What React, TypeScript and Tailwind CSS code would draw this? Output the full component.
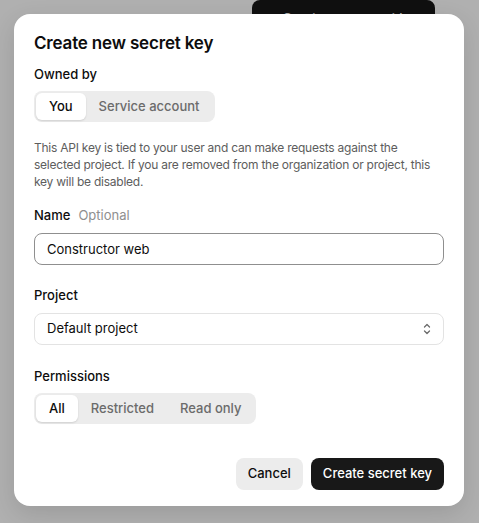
import React, { useState } from 'react';

const font = { fontFamily: 'Inter, "Noto Sans", sans-serif' };

type SegmentProps = {
    options: string[];
    value: string;
    onChange: (v: string) => void;
};

const Segmented: React.FC<SegmentProps> = ({ options, value, onChange }) => (
    <div className="inline-flex items-center p-[2px] rounded-lg bg-[#ececec]">
        {options.map(opt => (
            <button
                key={opt}
                onClick={() => onChange(opt)}
                className={`h-[27px] px-[13px] rounded-md text-[13px] font-medium leading-none ${
                    value === opt ? 'bg-white text-[#0d0d0d] shadow-[0_1px_2px_rgba(0,0,0,0.12)]' : 'text-[#6b6b6b]'
                }`}
            >
                {opt}
            </button>
        ))}
    </div>
);

const App: React.FC = () => {
    const [owner, setOwner] = useState('You');
    const [perm, setPerm] = useState('All');
    const [name, setName] = useState('Constructor web');

    return (
        <div className="relative w-[479px] h-[523px] overflow-hidden bg-white" style={font}>
            {/* page behind the dialog */}
            <div className="flex justify-end pr-[44px]">
                <button className="h-[38px] w-[183px] rounded-lg bg-[#181818] text-white text-[13px] font-medium flex items-center justify-center gap-2">
                    <span>+</span>
                    <span>Create new secret key</span>
                </button>
            </div>

            <div className="absolute inset-0 bg-black/[0.31] flex items-start pt-[14px] pl-[14px]">
                <div className="w-[450px] bg-white rounded-2xl shadow-[0_8px_24px_rgba(0,0,0,0.12)] px-5 pt-[16px] pb-4 text-[#0d0d0d]">
                    <h2 className="text-[17px] font-semibold leading-[26px] tracking-[-0.01em]">Create new secret key</h2>

                    <div className="mt-[8px] text-[13px] font-medium leading-5">Owned by</div>
                    <div className="mt-[7px]">
                        <Segmented options={['You', 'Service account']} value={owner} onChange={setOwner} />
                    </div>

                    <p className="mt-[17px] text-[12px] leading-[17px] tracking-[-0.02em] text-[#5d5d5d]">
                        This API key is tied to your user and can make requests against the selected project. If you are removed from the organization or project, this key will be disabled.
                    </p>

                    <div className="mt-[15px] text-[13px] leading-5">
                        <span className="font-medium">Name</span>
                        <span className="ml-[8px] text-[#8f8f8f]">Optional</span>
                    </div>
                    <input
                        value={name}
                        onChange={e => setName(e.target.value)}
                        className="mt-[8px] w-full h-[32px] rounded-lg border border-[#8f8f8f] px-3 text-[13px] outline-none"
                    />

                    <div className="mt-[20px] text-[13px] font-medium leading-5">Project</div>
                    <div className="mt-[8px] w-full h-[32px] rounded-lg border border-[#e3e3e3] pl-3 pr-[10px] flex items-center justify-between text-[13px]">
                        <span>Default project</span>
                        <svg width="12" height="14" viewBox="0 0 12 14" fill="none" stroke="#6b6b6b" strokeWidth="1.3" strokeLinecap="round" strokeLinejoin="round">
                            <path d="M3.5 5L6 2.5L8.5 5" />
                            <path d="M3.5 9L6 11.5L8.5 9" />
                        </svg>
                    </div>

                    <div className="mt-[21px] text-[13px] font-medium leading-5">Permissions</div>
                    <div className="mt-[7px]">
                        <Segmented options={['All', 'Restricted', 'Read only']} value={perm} onChange={setPerm} />
                    </div>

                    <div className="mt-[34px] flex justify-end gap-2">
                        <button className="h-[32px] px-3 rounded-lg bg-[#ececec] text-[13px] font-medium">Cancel</button>
                        <button className="h-[32px] px-3 rounded-lg bg-[#181818] text-white text-[13px] font-medium">Create secret key</button>
                    </div>
                </div>
            </div>
        </div>
    );
};

export default App;
